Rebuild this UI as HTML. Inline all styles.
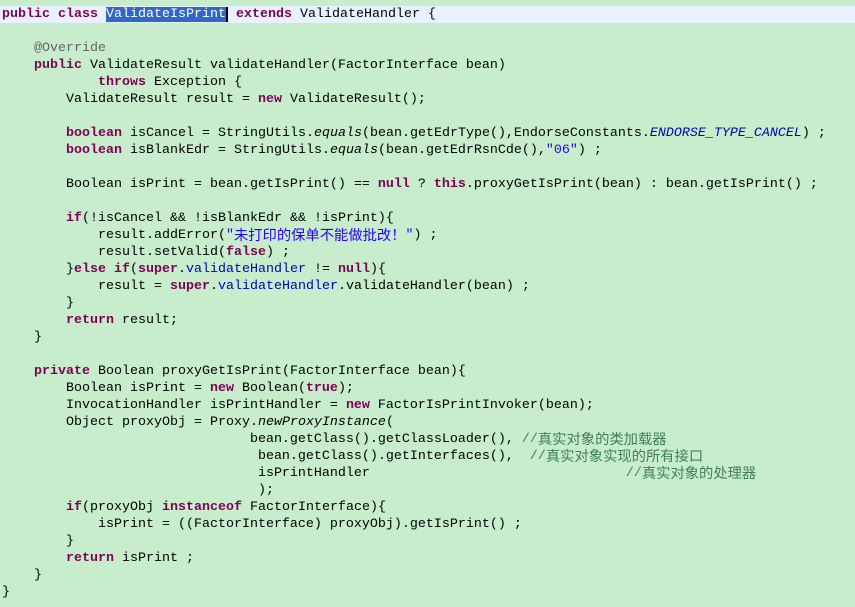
<!DOCTYPE html>
<html><head><meta charset="utf-8"><style>
html,body{margin:0;padding:0;background:#c7edcc;width:855px;height:607px;overflow:hidden}
.p{padding-top:6px;font-family:"Liberation Mono",monospace;font-size:13.33px;color:#000}
.p div{height:17px;line-height:17px;white-space:pre;padding-left:2px;overflow:visible}
.p div.l1{background:#e8f2fe}
.k{color:#7f0055;font-weight:bold}
.f{color:#0000c0}
.i{font-style:italic}
.s{color:#2a00ff}
.c{color:#3f7f5f}
.a{color:#646464}
.cj{font-family:"Noto Sans CJK SC","WenQuanYi Zen Hei",sans-serif;font-size:14.3px;line-height:15px;display:inline-block;height:17px;vertical-align:top}
.sel{background:#3168c6;color:#fff}
.cur{border-left:2px solid #000}
</style></head><body><div class="p">
<div class="l1"><span class="k">public</span> <span class="k">class</span> <span class="sel">ValidateIsPrint</span><span class="cur"></span> <span class="k">extends</span> ValidateHandler {</div>
<div>    </div>
<div>    <span class="a">@Override</span></div>
<div>    <span class="k">public</span> ValidateResult validateHandler(FactorInterface bean)</div>
<div>            <span class="k">throws</span> Exception {</div>
<div>        ValidateResult result = <span class="k">new</span> ValidateResult();</div>
<div>        </div>
<div>        <span class="k">boolean</span> isCancel = StringUtils.<span class="i">equals</span>(bean.getEdrType(),EndorseConstants.<span class="f i">ENDORSE_TYPE_CANCEL</span>) ;</div>
<div>        <span class="k">boolean</span> isBlankEdr = StringUtils.<span class="i">equals</span>(bean.getEdrRsnCde(),<span class="s">"06"</span>) ;</div>
<div>        </div>
<div>        Boolean isPrint = bean.getIsPrint() == <span class="k">null</span> ? <span class="k">this</span>.proxyGetIsPrint(bean) : bean.getIsPrint() ;</div>
<div>        </div>
<div>        <span class="k">if</span>(!isCancel &amp;&amp; !isBlankEdr &amp;&amp; !isPrint){</div>
<div>            result.addError(<span class="s">"<span class="cj">未打印的保单不能做批改！</span>"</span>) ;</div>
<div>            result.setValid(<span class="k">false</span>) ;</div>
<div>        }<span class="k">else</span> <span class="k">if</span>(<span class="k">super</span>.<span class="f">validateHandler</span> != <span class="k">null</span>){</div>
<div>            result = <span class="k">super</span>.<span class="f">validateHandler</span>.validateHandler(bean) ;</div>
<div>        }</div>
<div>        <span class="k">return</span> result;</div>
<div>    }</div>
<div>    </div>
<div>    <span class="k">private</span> Boolean proxyGetIsPrint(FactorInterface bean){</div>
<div>        Boolean isPrint = <span class="k">new</span> Boolean(<span class="k">true</span>);</div>
<div>        InvocationHandler isPrintHandler = <span class="k">new</span> FactorIsPrintInvoker(bean);</div>
<div>        Object proxyObj = Proxy.<span class="i">newProxyInstance</span>(</div>
<div>                               bean.getClass().getClassLoader(), <span class="c">//<span class="cj">真实对象的类加载器</span></span></div>
<div>                                bean.getClass().getInterfaces(),  <span class="c">//<span class="cj">真实对象实现的所有接口</span></span></div>
<div>                                isPrintHandler                                <span class="c">//<span class="cj">真实对象的处理器</span></span></div>
<div>                                );</div>
<div>        <span class="k">if</span>(proxyObj <span class="k">instanceof</span> FactorInterface){</div>
<div>            isPrint = ((FactorInterface) proxyObj).getIsPrint() ;</div>
<div>        }</div>
<div>        <span class="k">return</span> isPrint ;</div>
<div>    }</div>
<div>}</div>
</div></body></html>
